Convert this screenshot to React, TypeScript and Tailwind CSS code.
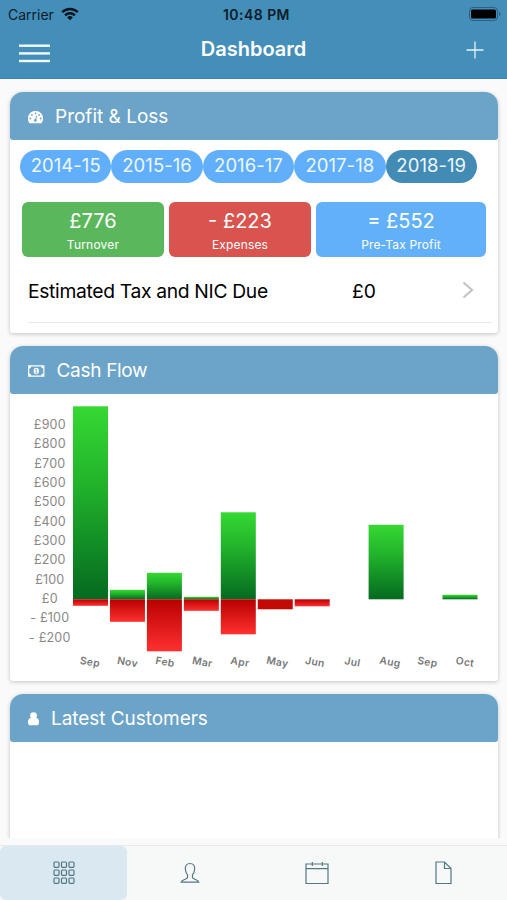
import React from "react";

const years = ["2014-15", "2015-16", "2016-17", "2017-18", "2018-19"];

const months = [
  { name: "Sep", up: 193, down: 6.5 },
  { name: "Nov", up: 9.5, down: 22.5 },
  { name: "Feb", up: 26.5, down: 52 },
  { name: "Mar", up: 2.5, down: 11.5 },
  { name: "Apr", up: 87, down: 35 },
  { name: "May", up: 0, down: 10 },
  { name: "Jun", up: 0, down: 7 },
  { name: "Jul", up: 0, down: 0 },
  { name: "Aug", up: 74.5, down: 0 },
  { name: "Sep", up: 0, down: 0 },
  { name: "Oct", up: 4.5, down: 0 },
];

const amounts = [900, 800, 700, 600, 500, 400, 300, 200, 100, 0, -100, -200];

function StatusBar() {
  return (
    <div className="relative flex h-7 items-center justify-between pl-2 pr-1.5 text-[14px] text-[#0c1c28]">
      <div className="flex items-center gap-[7px]">
        <span>Carrier</span>
        <svg width="18" height="14" viewBox="0 0 18 14" fill="none" stroke="#0a141c" strokeWidth="2.4">
          <path d="M1.2 5.2a11 11 0 0 1 15.6 0" />
          <path d="M4.1 8.3a7 7 0 0 1 9.8 0" />
          <path d="M9 13.2 6.2 10.4a4 4 0 0 1 5.6 0z" fill="#0a141c" stroke="none" />
        </svg>
      </div>
      <span className="absolute left-[223px] text-[14px] font-semibold tracking-[0.45px]">10:48 PM</span>
      <svg width="32" height="14" viewBox="0 0 32 14">
        <rect x="0.5" y="0.5" width="28" height="13" rx="3.5" fill="none" stroke="#2c5f80" />
        <rect x="2" y="2.5" width="25" height="9" rx="1.5" fill="#000" />
        <path d="M30 5v4q1.5-.5 1.5-2T30 5z" fill="#2c5f80" />
      </svg>
    </div>
  );
}

function Header() {
  return (
    <header className="h-[79px] shrink-0 border-b border-[#3d83ac] bg-[#448eba]">
      <StatusBar />
      <div className="grid h-[51px] grid-cols-[1fr_auto_1fr] pl-[19px] pr-[23px] text-white">
        <svg className="mt-4" width="31" height="20" viewBox="0 0 31 20" fill="#f4fbff">
          <rect y="0.5" width="31" height="2.4" />
          <rect y="8.2" width="31" height="2.4" />
          <rect y="15.8" width="31" height="2.4" />
        </svg>
        <h1 className="ml-1 mt-[7px] text-[20px] leading-7 font-semibold">Dashboard</h1>
        <svg
          className="mt-[13px] justify-self-end"
          width="18"
          height="18"
          viewBox="0 0 18 18"
          stroke="#e4f3fc"
          strokeWidth="1.3"
        >
          <path d="M9 .5v17M.5 9h17" />
        </svg>
      </div>
    </header>
  );
}

type CardProps = {
  icon: React.ReactNode;
  title: string;
  className: string;
  titleClass: string;
  children?: React.ReactNode;
};

function Card({ icon, title, className, titleClass, children }: CardProps) {
  return (
    <section
      className={`shrink-0 rounded-t-[13px] rounded-b-[3px] bg-white shadow-[0_1px_4px_rgba(0,0,0,0.22)] ${className}`}
    >
      <div className="flex h-12 items-center rounded-t-[13px] rounded-b-[3px] bg-[#6ba4c8] pl-[18px] pt-0.5 text-white">
        {icon}
        <h2 className={`text-[19px] ${titleClass}`}>{title}</h2>
      </div>
      {children}
    </section>
  );
}

function ProfitAndLoss() {
  return (
    <>
      <div className="ml-2.5 mt-2.5 flex">
        {years.map((year) => (
          <button
            key={year}
            className={`h-[33px] w-[91.4px] rounded-full pb-0.5 text-[18.5px] tracking-[0.05px] text-[#edf7ff] ${
              year === "2018-19" ? "bg-[#418bb5]" : "bg-[#61affa]"
            }`}
          >
            {year}
          </button>
        ))}
      </div>
      <div className="ml-3 mt-[19px] flex gap-[5px] text-center text-white">
        <div className="h-[55px] w-[142px] rounded-md bg-[#5bb75b] pt-[5px]">
          <div className="text-[20px] leading-7">£776</div>
          <div className="text-[12px] leading-5 tracking-[0.2px]">Turnover</div>
        </div>
        <div className="h-[55px] w-[142px] rounded-md bg-[#d9534f] pt-[5px]">
          <div className="text-[20px] leading-7">- £223</div>
          <div className="text-[12px] leading-5 tracking-[0.15px]">Expenses</div>
        </div>
        <div className="h-[55px] w-[170px] rounded-md bg-[#62b0f8] pt-[5px]">
          <div className="text-[20px] leading-7">= £552</div>
          <div className="text-[12px] leading-5 tracking-[0.15px]">Pre-Tax Profit</div>
        </div>
      </div>
      <div className="ml-[18px] mr-1.5 mt-[13px] flex h-[53px] items-center border-b border-[#e8e8e8] pb-2.5 text-[19.3px] text-black">
        <span className="w-[324px] tracking-[-0.33px]">Estimated Tax and NIC Due</span>
        <span className="w-[110px]">£0</span>
        <svg className="mb-0.5" width="12" height="18" viewBox="0 0 12 18" fill="none" stroke="#c4c4c8" strokeWidth="2.2">
          <path d="m1.5 1.5 8.5 7.5-8.5 7.5" />
        </svg>
      </div>
    </>
  );
}

function CashFlowChart() {
  return (
    <svg width="488" height="287" viewBox="0 0 488 287" className="block">
      <defs>
        <linearGradient id="income" x1="0" y1="0" x2="0" y2="1">
          <stop offset="0" stopColor="#35d933" />
          <stop offset="0.4" stopColor="#22b32b" />
          <stop offset="1" stopColor="#046a20" />
        </linearGradient>
        <linearGradient id="expense" x1="0" y1="0" x2="0" y2="1">
          <stop offset="0" stopColor="#b80000" />
          <stop offset="1" stopColor="#ff3030" />
        </linearGradient>
      </defs>
      {amounts.map((amount, i) => (
        <text
          key={amount}
          x="39.8"
          y={34.8 + i * 19.36}
          textAnchor="middle"
          className="fill-[#888888] text-[12.5px] tracking-[0.2px]"
        >
          {amount < 0 ? `- £${-amount}` : `£${amount}`}
        </text>
      ))}
      {months.map((month, i) => (
        <g key={i}>
          <rect x={63 + i * 36.95} y={205.3 - month.up} width="35" height={month.up} fill="url(#income)" />
          <rect
            x={63 + i * 36.95}
            y="205.3"
            width="35"
            height={month.down}
            fill={month.name === "May" ? "#c30a04" : "url(#expense)"}
          />
          <text
            x={80 + i * 37.5}
            y="271.5"
            textAnchor="middle"
            transform={`rotate(10 ${80 + i * 37.5} 268)`}
            className="fill-[#777777] text-[10.3px] font-semibold tracking-[0.3px]"
          >
            {month.name}
          </text>
        </g>
      ))}
    </svg>
  );
}

function TabBar() {
  return (
    <nav className="grid h-[55px] shrink-0 grid-cols-4 border-t border-[#e7eaeb] bg-[#f7f8f8] text-[#547785]">
      <button className="flex items-center justify-center rounded-md bg-[#dae8f1]">
        <svg className="ml-0.5" width="22" height="24" viewBox="0 0 22 24" fill="none" stroke="currentColor" strokeWidth="1.2">
          {[1, 9, 17].map((y) =>
            [1, 8.5, 16].map((x) => <rect key={`${x}-${y}`} x={x} y={y} width="5" height="5.3" rx="1" />)
          )}
        </svg>
      </button>
      <button className="flex items-center justify-center">
        <svg width="20" height="22" viewBox="0 0 20 22" fill="none" stroke="currentColor" strokeWidth="1.2">
          <path d="M10 1.500C7 1.500 5.300 3.400 5.300 6.500c0 2.500.8 4.500 2.200 6.300v2.700c0 2-5.500 1.500-6.300 4.700h17.600c-.8-3.200-6.300-2.700-6.300-4.700v-2.700c1.400-1.800 2.200-3.800 2.200-6.300 0-3.100-1.700-5-4.700-5z" />
        </svg>
      </button>
      <button className="flex items-center justify-center">
        <svg width="24" height="24" viewBox="0 0 24 24" fill="none" stroke="currentColor" strokeWidth="1.2">
          <path d="M1 3h22v19.5H1zM1 7.7h22M7.3 1v4M17.3 1v4" />
        </svg>
      </button>
      <button className="flex items-center justify-center">
        <svg width="17" height="24" viewBox="0 0 17 24" fill="none" stroke="currentColor" strokeWidth="1.2">
          <path d="M1 1h8.500L16 7.500v15H1zM9.500 1v6.500H16" />
        </svg>
      </button>
    </nav>
  );
}

function App() {
  return (
    <div className="flex h-[900px] w-[507px] flex-col overflow-hidden bg-[#fafafa] font-[Inter,'Liberation_Sans',sans-serif]">
      <Header />
      <main className="flex h-[759px] shrink-0 flex-col gap-[13px] overflow-hidden pl-2.5 pr-[9px] pt-[13px]">
        <Card
          title="Profit & Loss"
          className="h-[241px]"
          titleClass="ml-3"
          icon={
            <svg width="15" height="13" viewBox="0 0 15 13">
              <path d="M7.5 0A7.500 7.500 0 0 0 1.200 11.700q.4.600 1 .6h10.600q.6 0 1-.6A7.500 7.500 0 0 0 7.500 0z" fill="#fff" />
              <g fill="#6ba4c8">
                <circle cx="2.3" cy="7.5" r="0.9" />
                <circle cx="3.9" cy="3.9" r="0.9" />
                <circle cx="7.5" cy="2.3" r="0.9" />
                <circle cx="11.1" cy="3.9" r="0.9" />
                <circle cx="12.7" cy="7.5" r="0.9" />
                <circle cx="7.3" cy="9.3" r="1.4" />
              </g>
              <path d="M7.3 9.3 8.700 4.800" stroke="#6ba4c8" />
            </svg>
          }
        >
          <ProfitAndLoss />
        </Card>
        <Card
          title="Cash Flow"
          className="h-[335px]"
          titleClass="ml-3 tracking-[-0.3px]"
          icon={
            <svg width="16.500" height="12" viewBox="0 0 17 12">
              <path d="M.7.7h15.6v10.6H.7z" fill="none" stroke="#fff" strokeWidth="1.2" />
              <path d="M1 1h2.500A2.500 2.500 0 0 1 1 3.500zM16 1h-2.500A2.500 2.500 0 0 0 16 3.500zM1 11h2.500A2.500 2.500 0 0 0 1 8.500zM16 11h-2.500A2.500 2.500 0 0 1 16 8.500z" fill="#fff" />
              <ellipse cx="8.5" cy="6" rx="2.7" ry="3.4" fill="#fff" />
              <path d="M7.500 4.500 8.600 4v4M7.400 8h2.300" fill="none" stroke="#6ba4c8" strokeWidth=".8" />
            </svg>
          }
        >
          <CashFlowChart />
        </Card>
        <Card
          title="Latest Customers"
          className="h-[180px]"
          titleClass="ml-3 tracking-[-0.05px]"
          icon={
            <svg width="11" height="14" viewBox="0 0 11 14" fill="currentColor">
              <circle cx="5.5" cy="3.6" r="3.4" />
              <path d="M2.300 6C.7 6.300 0 8 0 10.500 0 12.400.9 13.300 2.200 13.300h6.600c1.300 0 2.200-.9 2.200-2.800C11 8 10.300 6.300 8.700 6z" />
            </svg>
          }
        />
      </main>
      <div className="h-[7px] shrink-0" />
      <TabBar />
    </div>
  );
}

export default App;
